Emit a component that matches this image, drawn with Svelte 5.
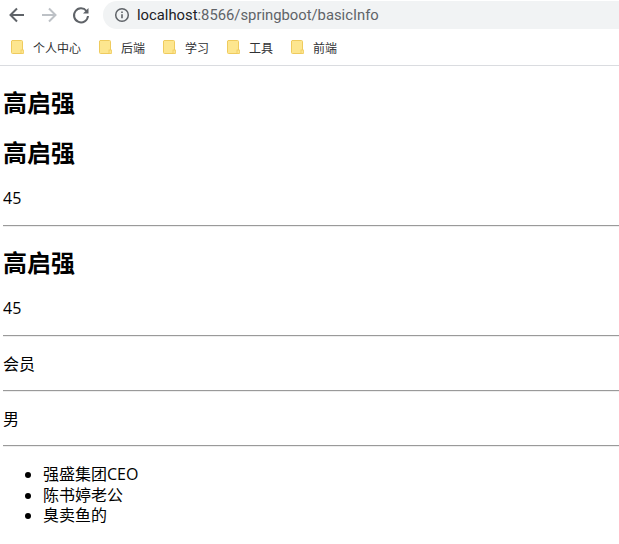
<script>
  const bookmarks = ['个人中心', '后端', '学习', '工具', '前端'];
</script>

<div class="chrome">
  <div class="toolbar">
    <svg class="nav" width="20" height="20" viewBox="0 0 20 20" fill="none" stroke="#5f6368" stroke-width="2"><path d="M17 10H4M10 3.500 3.500 10l6.500 6.500"/></svg>
    <svg class="nav" width="20" height="20" viewBox="0 0 20 20" fill="none" stroke="#bdc1c6" stroke-width="2"><path d="M3 10h13M10 3.500l6.500 6.500-6.500 6.500"/></svg>
    <svg class="nav" width="20" height="20" viewBox="0 0 20 20" fill="none"><path d="M15.500 6A7 7 0 1 0 17 11" stroke="#5f6368" stroke-width="2"/><path d="M17.500 3v5.500H12z" fill="#5f6368"/></svg>
    <div class="omnibox">
      <svg width="16" height="16" viewBox="0 0 16 16" fill="none"><circle cx="8" cy="8" r="6.300" stroke="#5f6368" stroke-width="1.500"/><path d="M8 7.200v4M8 4.500v1.500" stroke="#5f6368" stroke-width="1.600"/></svg>
      <span class="url"><span class="host">localhost</span>:8566/springboot/basicInfo</span>
    </div>
  </div>
  <div class="bookmarks">
    {#each bookmarks as b}
      <div class="bookmark">
        <svg width="13" height="15" viewBox="0 0 13 15"><path d="M1 .500h9.500a1 1 0 0 1 1 1v12H1.500a1 1 0 0 1-1-1V1z" fill="#fde68f" stroke="#efcb5e"/><rect x="10" y="10" width="2.500" height="3.500" fill="#fde68f" stroke="#efcb5e" stroke-width=".8"/></svg>
        <span>{b}</span>
      </div>
    {/each}
  </div>
</div>

<main>
  <h2>高启强</h2>
  <h2>高启强</h2>
  <p>45</p>
  <hr />
  <h2>高启强</h2>
  <p>45</p>
  <hr />
  <p>会员</p>
  <hr />
  <p>男</p>
  <hr />
  <ul>
    <li>强盛集团CEO</li>
    <li>陈书婷老公</li>
    <li>臭卖鱼的</li>
  </ul>
</main>

<style>
  :global(body) {
    margin: 0;
    background: #fff;
    color: #000;
    font-family: "Open Sans", "Noto Sans CJK SC", sans-serif;
    overflow: hidden;
  }
  .chrome {
    height: 65px;
    border-bottom: 1px solid #dadce0;
    box-sizing: content-box;
  }
  .toolbar {
    display: flex;
    align-items: center;
    height: 30px;
    padding-left: 7px;
    gap: 12px;
  }
  .nav { flex: none; }
  .omnibox {
    flex: 1;
    height: 28px;
    padding-left: 11px;
    display: flex;
    align-items: center;
    gap: 7px;
    background: #f1f3f4;
    border-radius: 14px 0 0 14px;
  }
  .url {
    font: 14.800px "Roboto", "Liberation Sans", sans-serif;
    color: #5f6368;
  }
  .host { color: #202124; }
  .bookmarks {
    display: flex;
    align-items: center;
    height: 35px;
    padding-left: 11px;
    gap: 18px;
  }
  .bookmark {
    display: flex;
    align-items: center;
    gap: 9px;
    font-size: 12px;
    color: #303134;
  }
  main { padding: 0 0 0 3px; }
  h2 {
    font-size: 24px;
    line-height: 30px;
    margin: 20px 0;
    font-weight: 700;
  }
  h2:first-child { margin-top: 22px; }
  hr + h2 { margin-top: 21px; }
  p {
    font-size: 16px;
    line-height: 21px;
    margin: 17px 0 15px;
  }
  h2 + p { margin-bottom: 16px; }
  hr {
    border: 0;
    border-top: 1px solid #9a9a9a;
    border-bottom: 1px solid #eee;
    margin: 8px 0;
  }
  ul {
    margin: 17px 0 16px;
    padding-left: 40px;
    font-size: 16px;
    line-height: 20.500px;
  }
</style>
